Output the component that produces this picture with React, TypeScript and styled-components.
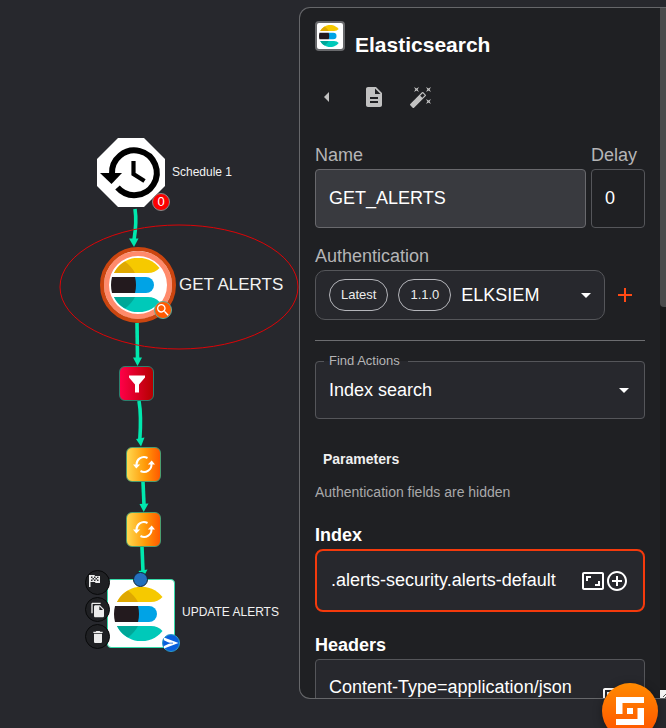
import React from "react";
import styled, { createGlobalStyle } from "styled-components";
import {
  MdAdd,
  MdAddCircleOutline,
  MdArrowDropDown,
  MdArrowLeft,
  MdAspectRatio,
  MdAutoFixHigh,
  MdDelete,
  MdDescription,
  MdFileCopy,
  MdSearch,
} from "react-icons/md";

const GlobalStyle = createGlobalStyle`
  * { box-sizing: border-box; }
  body {
    margin: 0;
    background: #27282d;
    color: #fff;
    font-family: "Liberation Sans", Arial, sans-serif;
    overflow: hidden;
  }
  button, input, select { font: inherit; color: inherit; }
  button { cursor: pointer; }
  svg { display: block; }
`;

const Page = styled.div`
  display: grid;
  grid-template-columns: minmax(0, 299fr) minmax(0, 367fr);
  height: 100vh;
`;

/* ---------- workflow canvas ---------- */

const Canvas = styled.main`
  position: relative;
`;

const Edges = styled.svg`
  position: absolute;
  left: 0;
  top: 0;
  overflow: visible;
  pointer-events: none;
`;

const Node = styled.button<{ $x: number; $y: number }>`
  position: absolute;
  left: ${(p) => p.$x}px;
  top: ${(p) => p.$y}px;
  padding: 0;
  border: 0;
  background: none;
`;

const TileNode = styled(Node)<{ $fill: string; $line: string }>`
  display: grid;
  place-items: center;
  width: 35px;
  height: 35px;
  border: 1px solid ${(p) => p.$line};
  border-radius: 6px;
  background: ${(p) => p.$fill};
`;

const RoundNode = styled(Node)`
  display: grid;
  place-items: center;
  width: 76px;
  height: 76px;
  border: 4px solid #cb450f;
  border-radius: 50%;
  background: #fff;
  box-shadow: inset 0 0 0 5px #ff8a6b;
`;

const AppNode = styled(Node)`
  display: grid;
  place-items: center;
  width: 68px;
  height: 69px;
  border: 1px solid #35dba9;
  border-radius: 4px;
  background: #fff;
`;

const NodeLabel = styled.span<{ $x: number; $y: number; $size: number }>`
  position: absolute;
  left: ${(p) => p.$x}px;
  top: ${(p) => p.$y}px;
  font-size: ${(p) => p.$size}px;
  line-height: 20px;
  color: #f2f2f2;
  white-space: nowrap;
`;

const Badge = styled.span<{ $x: number; $y: number; $fill: string; $line: string }>`
  position: absolute;
  left: ${(p) => p.$x}px;
  top: ${(p) => p.$y}px;
  display: grid;
  place-items: center;
  width: 18px;
  height: 18px;
  border: 1px solid ${(p) => p.$line};
  border-radius: 50%;
  background: ${(p) => p.$fill};
  font-size: 13px;
  line-height: 16px;
`;

const Handle = styled.span<{ $x: number; $y: number }>`
  position: absolute;
  left: ${(p) => p.$x}px;
  top: ${(p) => p.$y}px;
  width: 15px;
  height: 15px;
  border: 1px solid #123;
  border-radius: 50%;
  background: #2470bd;
`;

const RoundAction = styled(Node)`
  display: grid;
  place-items: center;
  width: 25px;
  height: 25px;
  border: 1px solid #08090a;
  border-radius: 50%;
  background: #1f2023;
  color: #ececec;
`;

/* ---------- settings panel ---------- */

const Panel = styled.aside`
  display: flex;
  margin: 7px 0 29px;
  border: 1px solid #66676a;
  border-right: 0;
  border-radius: 11px 0 0 11px;
  background: #1f2023;
  overflow: hidden;
`;

const PanelBody = styled.div`
  flex: 1;
  min-width: 0;
  padding: 13px 15px 0;
  overflow: hidden;
`;

const ScrollTrack = styled.div`
  display: flex;
  flex-direction: column;
  justify-content: space-between;
  flex: 0 0 6px;
  background: #19191a;
`;

const ScrollThumb = styled.div`
  height: 299px;
  border-radius: 0 0 0 4px;
  background: #4a4a4b;
`;

const Header = styled.header`
  display: flex;
  align-items: flex-start;
  gap: 10px;
`;

const AppIcon = styled.span`
  display: grid;
  place-items: center;
  width: 30px;
  height: 30px;
  border: 2px solid #68696c;
  border-radius: 4px;
  background: #fff;
`;

const Title = styled.h1`
  margin: 0;
  padding-top: 12px;
  font-size: 21px;
  line-height: 24px;
`;

const Toolbar = styled.div`
  display: flex;
  gap: 23px;
  margin-top: 28px;
`;

const IconButton = styled.button<{ $color?: string }>`
  flex: none;
  padding: 0;
  border: 0;
  background: none;
  color: ${(p) => p.$color ?? "#fff"};
`;

const Row = styled.div<{ $top?: number; $gap?: number }>`
  display: flex;
  align-items: center;
  gap: ${(p) => p.$gap ?? 0}px;
  margin-top: ${(p) => p.$top ?? 0}px;
`;

const Field = styled.div<{ $width?: number }>`
  flex: ${(p) => (p.$width ? `0 0 ${p.$width}px` : "1")};
  min-width: 0;
`;

const Label = styled.label<{ $strong?: boolean; $top?: number }>`
  display: block;
  margin: ${(p) => p.$top ?? 0}px 0 4px;
  font-size: 18px;
  font-weight: ${(p) => (p.$strong ? 700 : 400)};
  line-height: 20px;
  color: ${(p) => (p.$strong ? "#fff" : "#b5b5b6")};
`;

const TextBox = styled.input<{ $filled?: boolean }>`
  display: block;
  width: 100%;
  height: 59px;
  padding: 0 13px;
  border: 1px solid ${(p) => (p.$filled ? "#69696d" : "#55565a")};
  border-radius: 4px;
  outline: 0;
  background: ${(p) => (p.$filled ? "#393a3f" : "#1f2023")};
  font-size: 18px;
`;

const PickerBox = styled.div`
  display: flex;
  align-items: center;
  flex: 1;
  min-width: 0;
  gap: 10px;
  height: 50px;
  padding: 0 6px 0 13px;
  border: 1px solid #55565a;
  border-radius: 10px;
  background: #27282d;
`;

const Chip = styled.span`
  flex: none;
  padding: 0 11px;
  border: 1px solid #b4b5ba;
  border-radius: 16px;
  font-size: 13px;
  line-height: 30px;
  color: #ececec;
`;

const Select = styled.select`
  flex: 1;
  min-width: 0;
  height: 32px;
  padding: 0;
  border: 0;
  outline: 0;
  background: transparent;
  appearance: none;
  font-size: 18px;
`;

const Divider = styled.hr`
  margin: 20px 0 11px;
  border: 0;
  border-top: 1px solid #6c6d70;
`;

const Outline = styled.fieldset`
  display: flex;
  align-items: center;
  height: 67px;
  min-width: 0;
  margin: 0;
  padding: 0 8px 8px 13px;
  border: 1px solid #55565a;
  border-radius: 4px;
  background: #27282d;
`;

const Legend = styled.legend`
  margin-left: -5px;
  padding: 0 8px 0 5px;
  font-size: 13px;
  line-height: 18px;
  color: #b5b5b6;
`;

const SectionTitle = styled.h2`
  margin: 30px 0 0 8px;
  font-size: 14px;
  line-height: 20px;
  color: #f0f0f0;
`;

const Note = styled.p`
  margin: 13px 0 23px;
  font-size: 14px;
  line-height: 20px;
  color: #a9a9aa;
`;

const ParamBox = styled.div<{ $active?: boolean }>`
  display: flex;
  align-items: center;
  height: ${(p) => (p.$active ? 63 : 57)}px;
  padding: 0 14px 0 ${(p) => (p.$active ? 14 : 13)}px;
  border: ${(p) => (p.$active ? "2px solid #f53a0c" : "1px solid #55565a")};
  border-radius: ${(p) => (p.$active ? 8 : 4)}px;
  background: #27282d;
`;

const ParamInput = styled.input`
  flex: 1;
  min-width: 0;
  padding: 0;
  border: 0;
  outline: 0;
  background: transparent;
  font-size: 18px;
`;

const ParamActions = styled.div<{ $low?: boolean }>`
  display: flex;
  flex: none;
  align-self: ${(p) => (p.$low ? "flex-end" : "center")};
  margin: ${(p) => (p.$low ? "0 4px 6px 0" : "0")};
`;

const Corner = styled.svg`
  background: #f4f4f4;
`;

const Launcher = styled.button`
  position: fixed;
  right: 8px;
  bottom: -11px;
  display: grid;
  place-items: center;
  width: 56px;
  height: 56px;
  padding: 0;
  border: 0;
  border-radius: 50%;
  background: linear-gradient(#ff8a00, #ff5000);
  box-shadow: 0 2px 10px rgba(0, 0, 0, 0.35);
`;

/* ---------- drawings ---------- */

function ElasticLogo({ size }: { size: number }) {
  return (
    <svg width={size} height={size} viewBox="0 0 54 54" aria-hidden="true">
      <path d="M3 15A27 27 0 0 1 48.500 10Q44 15 37 15Z" fill="#f6c900" />
      <path d="M3 15A27 27 0 0 1 14 3.500Q21 9 24 15Z" fill="#dfa800" />
      <path d="M24 19H35a8 8 0 0 1 0 16H24Z" fill="#00a3e6" />
      <path d="M1 19H24Q26 27 24 35H1Q-1 27 1 19Z" fill="#231a1e" />
      <path d="M3 39A27 27 0 0 0 48.500 44Q44 39 37 39Z" fill="#00c9b9" />
      <path d="M3 39A27 27 0 0 0 14 50.500Q21 45 24 39Z" fill="#00a798" />
    </svg>
  );
}

function ScheduleArt() {
  return (
    <svg width="68" height="69" viewBox="0 0 68 69" aria-hidden="true">
      <path d="M21 0H47L68 21V48L47 69H21L0 48V21Z" fill="#fff" />
      <path d="M15 36A22.400 22.400 0 1 1 20.500 49.500" fill="none" stroke="#000" strokeWidth="6" />
      <path d="M3 35H25L14.500 46Z" fill="#000" />
      <path d="M36.500 23V36L47.500 43" fill="none" stroke="#000" strokeWidth="4.200" />
    </svg>
  );
}

function LoopArt() {
  return (
    <svg width="24" height="20" viewBox="0 0 24 20" aria-hidden="true">
      <g fill="none" stroke="#fff" strokeWidth="2">
        <path d="M4.600 10.500A7.400 7.400 0 0 1 15.500 3" />
        <path d="M19.400 8.500A7.400 7.400 0 0 1 8.500 16" />
      </g>
      <path d="M1 9.500H8.200L4.300 13.500ZM23 9.500H15.800L19.700 5.500Z" fill="#fff" />
    </svg>
  );
}

function FunnelArt() {
  return (
    <svg width="18" height="18" viewBox="0 0 18 18" aria-hidden="true">
      <path d="M1 .5H17V2.500L11 9.500V17.500H7V9.500L1 2.500Z" fill="#fff" />
    </svg>
  );
}

function FlagArt() {
  return (
    <svg width="18" height="18" viewBox="1 1 18 18" aria-hidden="true">
      <path d="M1 2H6.500L7 3H12V10H7.500L7 9H2.500V14H1Z" fill="#ececec" />
      <path d="M3 3.500h1.500V5H3zM6 3.500h1.500V5H6zM4.500 5H6v1.500H4.500zM7.500 5H9v1.500H7.500zM9 3.700h1.500V5H9zM3 6.500h1.500V8H3zM6 6.500h1.500V8H6zM9 6.500h1.500V8H9z" fill="#333437" />
    </svg>
  );
}

function SendArt() {
  return (
    <svg width="16" height="16" viewBox="0 0 16 16" aria-hidden="true">
      <path d="M1 2.500L15.500 8L1 13.500V11L7 8.200L1 5.200Z" fill="#fff" />
      <path d="M1 7.700H10V8.500H1Z" fill="#0a5fdc" />
    </svg>
  );
}

function BrandMark() {
  return (
    <svg width="28" height="28" viewBox="0 0 28 28" aria-hidden="true">
      <path d="M0 0H28V6H6.500V17H0ZM28 28H0V22H21.500V11H28ZM11 11H17V17H11Z" fill="#fff" />
    </svg>
  );
}

const edges = [
  { line: "M135 209Q137 222 134 240", tip: "M129 238.500H138.500L134 247Z" },
  { line: "M137 323L137.500 358", tip: "M133 357.500H142L137.500 366Z" },
  { line: "M139 401Q141.500 415 139.800 440", tip: "M136 439L144.500 437.500L141 446.500Z" },
  { line: "M143 482L144 505", tip: "M139.500 504L148.500 503.500L143.700 512Z" },
  { line: "M142 547L143 572", tip: "M138.500 571L147.500 569.500L143 578Z" },
];

const tiles = [
  { name: "Filter", x: 119, y: 366, fill: "linear-gradient(90deg, #ff0048, #b50000)", line: "#2c7f6e", art: <FunnelArt /> },
  { name: "Repeat 1", x: 126, y: 447, fill: "linear-gradient(90deg, #ffd84f, #ff9a08 55%, #ff5a00)", line: "#4c9d70", art: <LoopArt /> },
  { name: "Repeat 2", x: 126, y: 512, fill: "linear-gradient(90deg, #ffd84f, #ff9a08 55%, #ff5a00)", line: "#4c9d70", art: <LoopArt /> },
];

function Workflow() {
  return (
    <Canvas>
      <Edges width="299" height="700" aria-hidden="true">
        {edges.map((e) => (
          <g key={e.line}>
            <path d={e.line} fill="none" stroke="#00e8ae" strokeWidth="3.600" />
            <path d={e.tip} fill="#00e8ae" />
          </g>
        ))}
        <ellipse cx="179" cy="287" rx="119" ry="62" fill="none" stroke="#dc0407" />
      </Edges>

      <Node $x={97} $y={138} aria-label="Schedule 1">
        <ScheduleArt />
      </Node>
      <Badge $x={152} $y={193} $fill="#fb0000" $line="#8b8b8b">0</Badge>
      <NodeLabel $x={172} $y={162} $size={12}>Schedule 1</NodeLabel>

      <RoundNode $x={100} $y={247} aria-label="Get alerts">
        <ElasticLogo size={54} />
      </RoundNode>
      <Badge $x={154} $y={301} $fill="#ff5a00" $line="#5fae9c">
        <MdSearch size={16} />
      </Badge>
      <NodeLabel $x={179} $y={275} $size={17}>GET ALERTS</NodeLabel>

      {tiles.map((t) => (
        <TileNode key={t.name} $x={t.x} $y={t.y} $fill={t.fill} $line={t.line} aria-label={t.name}>
          {t.art}
        </TileNode>
      ))}

      <AppNode $x={107} $y={579} aria-label="Update alerts">
        <ElasticLogo size={54} />
      </AppNode>
      <Handle $x={133} $y={572} />
      <Badge $x={162} $y={634} $fill="#0a5fdc" $line="#2b9cc9">
        <SendArt />
      </Badge>
      <NodeLabel $x={182} $y={602} $size={12}>UPDATE ALERTS</NodeLabel>

      <RoundAction $x={85} $y={570} aria-label="Set as start">
        <FlagArt />
      </RoundAction>
      <RoundAction $x={85} $y={597} aria-label="Copy">
        <MdFileCopy size={16} />
      </RoundAction>
      <RoundAction $x={85} $y={624} aria-label="Delete">
        <MdDelete size={16} />
      </RoundAction>
    </Canvas>
  );
}

function ParamButtons({ low }: { low?: boolean }) {
  return (
    <ParamActions $low={low}>
      <IconButton aria-label="Expand editor">
        <MdAspectRatio size={24} />
      </IconButton>
      {!low && (
        <IconButton aria-label="Add variable">
          <MdAddCircleOutline size={24} />
        </IconButton>
      )}
    </ParamActions>
  );
}

function Settings() {
  return (
    <Panel>
      <PanelBody>
        <Header>
          <AppIcon>
            <ElasticLogo size={22} />
          </AppIcon>
          <Title>Elasticsearch</Title>
        </Header>
        <Toolbar>
          <IconButton $color="#c1c1c1" aria-label="Back"><MdArrowLeft size={24} /></IconButton>
          <IconButton $color="#c1c1c1" aria-label="Documentation"><MdDescription size={24} /></IconButton>
          <IconButton $color="#c1c1c1" aria-label="Autofill"><MdAutoFixHigh size={24} /></IconButton>
        </Toolbar>

        <Row $top={36} $gap={5}>
          <Field>
            <Label htmlFor="name">Name</Label>
            <TextBox id="name" $filled defaultValue="GET_ALERTS" />
          </Field>
          <Field $width={54}>
            <Label htmlFor="delay">Delay</Label>
            <TextBox id="delay" defaultValue="0" />
          </Field>
        </Row>

        <Label htmlFor="auth" $top={18}>Authentication</Label>
        <Row $gap={8}>
          <PickerBox>
            <Chip>Latest</Chip>
            <Chip>1.1.0</Chip>
            <Select id="auth" defaultValue="ELKSIEM">
              <option>ELKSIEM</option>
            </Select>
            <MdArrowDropDown size={24} />
          </PickerBox>
          <IconButton $color="#ff4a14" aria-label="Add authentication">
            <MdAdd size={24} />
          </IconButton>
          <span />
        </Row>

        <Divider />

        <Outline>
          <Legend><label htmlFor="action">Find Actions</label></Legend>
          <Select id="action" defaultValue="Index search">
            <option>Index search</option>
          </Select>
          <MdArrowDropDown size={24} />
        </Outline>

        <SectionTitle>Parameters</SectionTitle>
        <Note>Authentication fields are hidden</Note>

        <Label htmlFor="index" $strong>Index</Label>
        <ParamBox $active>
          <ParamInput id="index" defaultValue=".alerts-security.alerts-default" />
          <ParamButtons />
        </ParamBox>

        <Label htmlFor="headers" $strong $top={23}>Headers</Label>
        <ParamBox>
          <ParamInput id="headers" defaultValue="Content-Type=application/json" />
          <ParamButtons low />
        </ParamBox>
      </PanelBody>
      <ScrollTrack>
        <ScrollThumb />
        <Corner width="6" height="8" viewBox="0 0 6 8" aria-hidden="true">
          <path d="M3 7L6 4M5 8L6 7" stroke="#555" fill="none" />
        </Corner>
      </ScrollTrack>
    </Panel>
  );
}

export default function App() {
  return (
    <>
      <GlobalStyle />
      <Page>
        <Workflow />
        <Settings />
      </Page>
      <Launcher aria-label="Open assistant">
        <BrandMark />
      </Launcher>
    </>
  );
}
